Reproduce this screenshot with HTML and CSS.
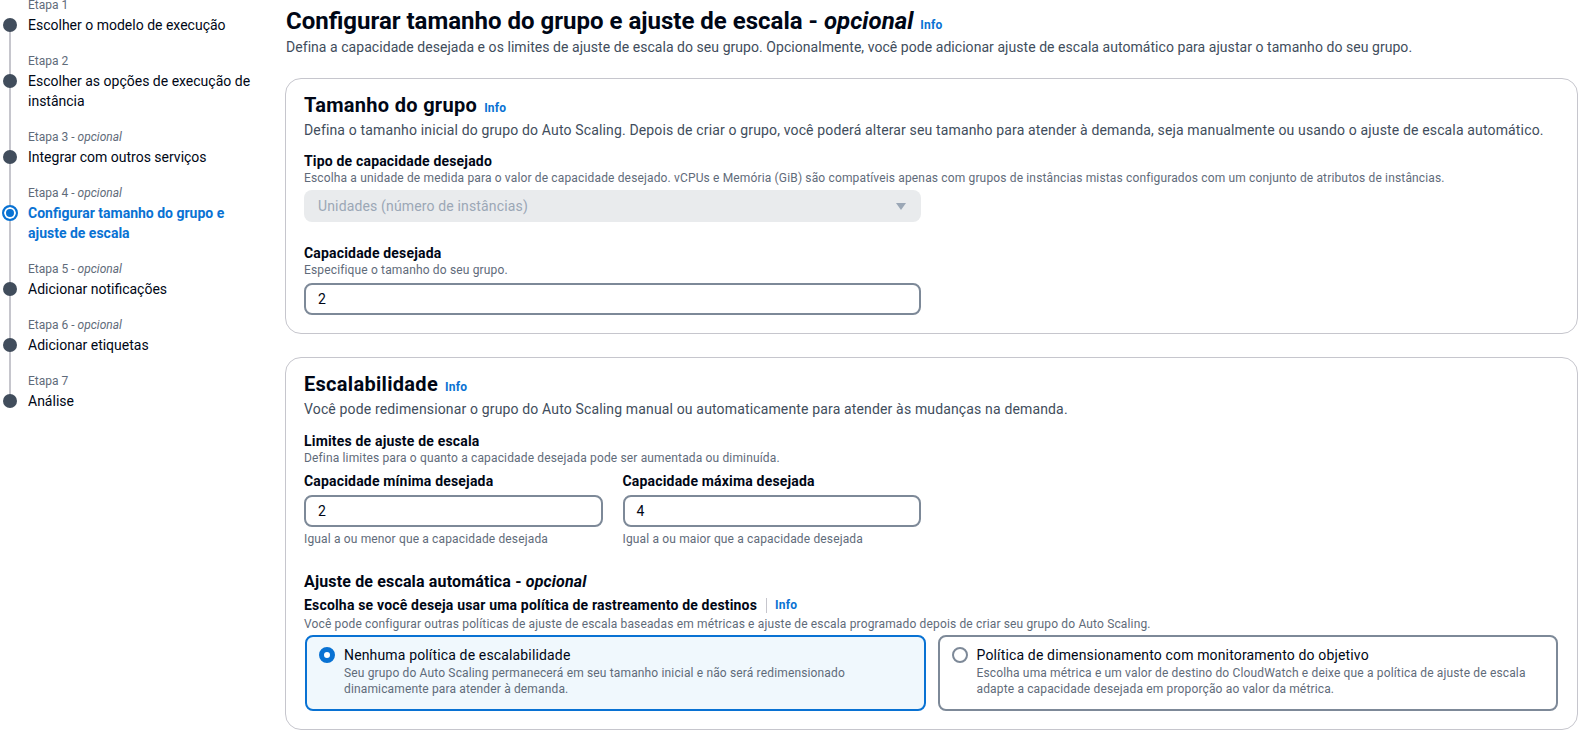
FILE: index.html
```html
<!DOCTYPE html>
<html lang="pt-BR">
<head>
<meta charset="utf-8">
<title>Configurar tamanho do grupo e ajuste de escala</title>
<link rel="stylesheet" href="styles.css">
</head>
<body>
<div class="page">
  <nav class="steps">
    <ol class="step-list">
      <li class="step">
        <div class="step-label">Etapa 1</div>
        <span class="dot"></span>
        <div class="step-title">Escolher o modelo de execução</div>
      </li>
      <li class="step">
        <div class="step-label">Etapa 2</div>
        <span class="dot"></span>
        <div class="step-title">Escolher as opções de execução de instância</div>
      </li>
      <li class="step">
        <div class="step-label">Etapa 3 - <i>opcional</i></div>
        <span class="dot"></span>
        <div class="step-title">Integrar com outros serviços</div>
      </li>
      <li class="step step-active">
        <div class="step-label">Etapa 4 - <i>opcional</i></div>
        <span class="dot dot-active"></span>
        <div class="step-title">Configurar tamanho do grupo e ajuste de escala</div>
      </li>
      <li class="step">
        <div class="step-label">Etapa 5 - <i>opcional</i></div>
        <span class="dot"></span>
        <div class="step-title">Adicionar notificações</div>
      </li>
      <li class="step">
        <div class="step-label">Etapa 6 - <i>opcional</i></div>
        <span class="dot"></span>
        <div class="step-title">Adicionar etiquetas</div>
      </li>
      <li class="step">
        <div class="step-label">Etapa 7</div>
        <span class="dot"></span>
        <div class="step-title">Análise</div>
      </li>
    </ol>
  </nav>

  <main class="content">
    <header class="page-header">
      <h1 class="page-title">Configurar tamanho do grupo e ajuste de escala - <i>opcional</i><a class="info info-h1">Info</a></h1>
      <p class="page-desc">Defina a capacidade desejada e os limites de ajuste de escala do seu grupo. Opcionalmente, você pode adicionar ajuste de escala automático para ajustar o tamanho do seu grupo.</p>
    </header>

    <section class="card card-size">
      <h2 class="card-title">Tamanho do grupo<a class="info">Info</a></h2>
      <p class="card-desc">Defina o tamanho inicial do grupo do Auto Scaling. Depois de criar o grupo, você poderá alterar seu tamanho para atender à demanda, seja manualmente ou usando o ajuste de escala automático.</p>

      <div class="field field-first">
        <div class="field-label">Tipo de capacidade desejado</div>
        <div class="field-hint">Escolha a unidade de medida para o valor de capacidade desejado. vCPUs e Memória (GiB) são compatíveis apenas com grupos de instâncias mistas configurados com um conjunto de atributos de instâncias.</div>
        <div class="select">
          <span>Unidades (número de instâncias)</span>
          <svg class="caret" width="16" height="16" viewBox="0 0 16 16"><path d="M3 5h10l-5 7z" fill="#9ba7b6"/></svg>
        </div>
      </div>

      <div class="field field-second">
        <div class="field-label">Capacidade desejada</div>
        <div class="field-hint">Especifique o tamanho do seu grupo.</div>
        <div class="input input-wide">2</div>
      </div>
    </section>

    <section class="card card-scale">
      <h2 class="card-title">Escalabilidade<a class="info">Info</a></h2>
      <p class="card-desc">Você pode redimensionar o grupo do Auto Scaling manual ou automaticamente para atender às mudanças na demanda.</p>

      <div class="field field-first">
        <div class="field-label">Limites de ajuste de escala</div>
        <div class="field-hint">Defina limites para o quanto a capacidade desejada pode ser aumentada ou diminuída.</div>
        <div class="pair">
          <div class="pair-item">
            <div class="field-label">Capacidade mínima desejada</div>
            <div class="input">2</div>
            <div class="field-constraint">Igual a ou menor que a capacidade desejada</div>
          </div>
          <div class="pair-item">
            <div class="field-label">Capacidade máxima desejada</div>
            <div class="input">4</div>
            <div class="field-constraint">Igual a ou maior que a capacidade desejada</div>
          </div>
        </div>
      </div>

      <h3 class="sub-title">Ajuste de escala automática - <i>opcional</i></h3>
      <div class="field-label label-info">Escolha se você deseja usar uma política de rastreamento de destinos<span class="sep"></span><a class="info">Info</a></div>
      <div class="field-hint hint-tight">Você pode configurar outras políticas de ajuste de escala baseadas em métricas e ajuste de escala programado depois de criar seu grupo do Auto Scaling.</div>

      <div class="tiles">
        <div class="tile tile-selected">
          <span class="radio radio-on"></span>
          <div class="tile-body">
            <div class="tile-title">Nenhuma política de escalabilidade</div>
            <div class="tile-desc">Seu grupo do Auto Scaling permanecerá em seu tamanho inicial e não será redimensionado<br>dinamicamente para atender à demanda.</div>
          </div>
        </div>
        <div class="tile">
          <span class="radio"></span>
          <div class="tile-body">
            <div class="tile-title">Política de dimensionamento com monitoramento do objetivo</div>
            <div class="tile-desc">Escolha uma métrica e um valor de destino do CloudWatch e deixe que a política de ajuste de escala<br>adapte a capacidade desejada em proporção ao valor da métrica.</div>
          </div>
        </div>
      </div>
    </section>
  </main>
</div>
</body>
</html>
```

FILE: styles.css
```css
* { box-sizing: border-box; }

html, body {
  margin: 0;
  padding: 0;
  background: #ffffff;
}

body {
  font-family: Roboto, "Liberation Sans", Arial, sans-serif;
  font-size: 14px;
  line-height: 20px;
  color: #000716;
  overflow: hidden;
}

.page {
  display: grid;
  grid-template-columns: 285px 1fr;
  padding-right: 7px;
}

/* ---------- Steps ---------- */
.steps {
  margin-top: -5px;
}

.step-list {
  list-style: none;
  margin: 0;
  padding: 0;
}

.step {
  position: relative;
  display: grid;
  grid-template-columns: 28px 232px;
  margin-bottom: 16px;
}

.step::before {
  content: "";
  position: absolute;
  left: 9px;
  top: 30px;
  width: 2px;
  height: calc(100% + 16px);
  background: #c6c6cd;
}

.step:last-child::before { display: none; }

.step-label {
  grid-column: 2;
  grid-row: 1;
  font-size: 12px;
  line-height: 20px;
  color: #5f6b7a;
}

.step-title {
  grid-column: 2;
  grid-row: 2;
  font-size: 14px;
  line-height: 20px;
  color: #000716;
}

.dot {
  grid-column: 1;
  grid-row: 2;
  position: relative;
  z-index: 1;
  width: 14px;
  height: 14px;
  margin: 3px 0 0 3px;
  border-radius: 50%;
  background: #414d5c;
}

.dot-active {
  width: 16px;
  height: 16px;
  margin: 2px 0 0 2px;
  border: 2px solid #0972d3;
  background: #0972d3;
  box-shadow: inset 0 0 0 2px #ffffff;
}

.step-active .step-title {
  color: #0972d3;
  font-weight: 700;
}

/* ---------- Content ---------- */
.content {
  padding-top: 6px;
  min-width: 0;
  letter-spacing: 0.15px;
}

.page-title {
  margin: 0;
  font-size: 24px;
  line-height: 30px;
  font-weight: 700;
  color: #000716;
  padding-left: 1px;
  letter-spacing: 0;
}

.info {
  font-size: 12px;
  line-height: 16px;
  font-weight: 700;
  color: #0972d3;
  margin-left: 7px;
  font-style: normal;
  letter-spacing: 0.2px;
}

.page-desc {
  margin: 1px 0 0;
  padding-left: 1px;
  line-height: 20px;
  color: #414d5c;
  white-space: nowrap;
  letter-spacing: 0.05px;
}

.card {
  margin-top: 21px;
  border: 1px solid #c6c6cd;
  border-radius: 16px;
  padding: 14px 19px 18px 18px;
  background: #ffffff;
}

.card-scale {
  margin-top: 23px;
  padding-top: 14px;
}

.card-title {
  margin: 0;
  font-size: 20px;
  line-height: 24px;
  font-weight: 700;
  color: #000716;
  letter-spacing: 0.3px;
}

.card-desc {
  margin: 3px 0 0;
  color: #414d5c;
  white-space: nowrap;
}

.field-first { margin-top: 12px; }
.card-scale .field-first { margin-top: 13px; }
.field-second { margin-top: 22px; }

.field-label {
  font-size: 14px;
  line-height: 18px;
  font-weight: 700;
  color: #000716;
  letter-spacing: 0.18px;
}

.field-hint {
  font-size: 12px;
  line-height: 16px;
  color: #5f6b7a;
  white-space: nowrap;
}

.select {
  margin-top: 4px;
  width: 617px;
  height: 32px;
  display: flex;
  align-items: center;
  justify-content: space-between;
  padding: 0 12px 0 14px;
  background: #e9ebed;
  border-radius: 8px;
  color: #9ba7b6;
}

.caret { display: block; }

.input {
  height: 32px;
  border: 2px solid #7d8998;
  border-radius: 8px;
  padding: 0 12px;
  display: flex;
  align-items: center;
  color: #000716;
  background: #ffffff;
}

.input-wide {
  margin-top: 5px;
  width: 617px;
}

.pair {
  margin-top: 6px;
  width: 617px;
  display: grid;
  grid-template-columns: 1fr 1fr;
  column-gap: 20px;
}

.pair .input { margin-top: 5px; }

.field-constraint {
  margin-top: 4px;
  font-size: 12px;
  line-height: 16px;
  color: #5f6b7a;
}

.sub-title {
  margin: 25px 0 0;
  font-size: 16px;
  line-height: 20px;
  font-weight: 700;
  color: #000716;
}

.label-info {
  margin-top: 4px;
  display: flex;
  align-items: center;
}

.sep {
  width: 1px;
  height: 15px;
  background: #c6c6cd;
  margin: 0 8px 0 9px;
}

.label-info .info { margin-left: 0; }

.hint-tight { margin-top: 2px; }

.tiles {
  margin-top: 3px;
  display: grid;
  grid-template-columns: 1fr 1fr;
  column-gap: 12px;
  margin-left: 1px;
}

.tile {
  display: grid;
  grid-template-columns: 16px 1fr;
  column-gap: 9px;
  align-items: start;
  height: 76px;
  padding: 8px 12px 12px 12px;
  border: 2px solid #7d8998;
  border-radius: 8px;
  background: #ffffff;
}

.tile-selected {
  border-color: #0972d3;
  background: #f0f8fd;
}

.radio {
  width: 16px;
  height: 16px;
  margin-top: 2px;
  border-radius: 50%;
  border: 2px solid #7d8998;
  background: #ffffff;
}

.radio-on {
  border: 5px solid #0972d3;
}

.tile-title {
  font-size: 14px;
  line-height: 20px;
  color: #000716;
}

.tile-desc {
  font-size: 12px;
  line-height: 16px;
  color: #5f6b7a;
  white-space: nowrap;
}
```
